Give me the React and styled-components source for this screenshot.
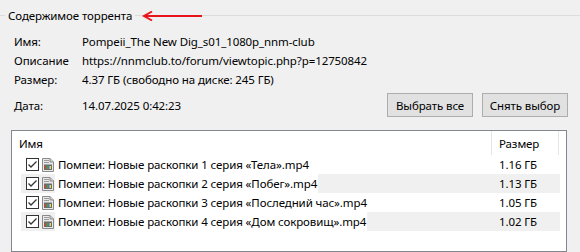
import styled, { createGlobalStyle } from 'styled-components';

const Global = createGlobalStyle`
    html, body {
        margin:0;
        padding:0;
        background:#f0f0f0;
    }
`

const Window = styled.div`
    width:580px;
    height:252px;
    overflow:hidden;
    background:#f0f0f0;
    color:#000;
    font-family:"Noto Sans", "Liberation Sans", sans-serif;
    font-size:11.5px;
    letter-spacing:-0.1px;
    display:flex;
    flex-direction:column;
`
const GroupHeader = styled.div`
    display:flex;
    align-items:center;
    height:16px;
    margin-top:8px;
    line-height:16px;
`
const Line = styled.div`
    height:16px;
    flex:${props=>props.grow ? 1 : 'none'};
    width:${props=>props.grow ? 'auto' : '5px'};
    background:linear-gradient(#dcdcdc,#dcdcdc) no-repeat 0 7px / 100% 1px;
    display:flex;
    align-items:center;
`
const GroupTitle = styled.span`
    padding:0 3px;
    white-space:nowrap;
`
const Info = styled.div`
    display:grid;
    grid-template-columns:68px 1fr;
    grid-auto-rows:19px;
    align-items:center;
    padding-left:14px;
    margin-top:8px;
    white-space:nowrap;
`
const DateRow = styled.div`
    display:flex;
    align-items:center;
    height:24px;
    margin-top:4px;
    padding:0 12px 0 14px;
`
const DateLabel = styled.span`
    width:68px;
`
const DateValue = styled.span`
    flex:1;
`
const Button = styled.button`
    width:86px;
    height:24px;
    margin-left:9px;
    border:1px solid #adadad;
    background:#e1e1e1;
    font:inherit;
    letter-spacing:inherit;
    color:#000;
    padding:0;
`
const List = styled.div`
    margin:13px 13px 0 11px;
    flex:1;
    border:1px solid #828790;
    background:#fff;
`
const Header = styled.div`
    display:grid;
    grid-template-columns:480px 67px 1fr;
    height:24px;
`
const HeaderCell = styled.div`
    display:flex;
    align-items:center;
    padding-left:7px;
    border-right:${props=>props.sep ? '1px solid #e5e5e5' : 'none'};
`
const Rows = styled.div`
    padding:0 6px 0 9px;
`
const Row = styled.div`
    display:grid;
    grid-template-columns:471px 1fr;
    height:19px;
    align-items:center;
    background:${props=>props.alt ? '#f0f0f0' : '#fff'};
`
const NameCell = styled.div`
    display:flex;
    align-items:center;
    padding-left:5px;
    white-space:nowrap;
`
const Label = styled.span`
    background:#fff;
    padding-left:3px;
    padding-right:1px;
    line-height:19px;
`
const SizeCell = styled.div`
    padding-left:7px;
`

function CheckBox()
{
    return(
        <svg width="13" height="13" viewBox="0 0 13 13" style={{flex:'none'}}>
            <rect x="0.5" y="0.5" width="12" height="12" fill="#fff" stroke="#333"/>
            <path d="M2.5 6.5 L5 9 L10.5 3.5" fill="none" stroke="#333" strokeWidth="1.3"/>
        </svg>
    )
}

function VideoIcon()
{
    return(
        <svg width="14" height="16" viewBox="0 0 14 16" style={{flex:'none',marginLeft:2}}>
            <path d="M1.5 1.5 H9 L12.5 5 V14.5 H1.5 Z" fill="#e8e8e8" stroke="#8a8a8a"/>
            <path d="M9 1.5 V5 H12.5" fill="#cfcfcf" stroke="#8a8a8a"/>
            <rect x="3" y="3" width="5" height="1" fill="#9a9a9a"/>
            <rect x="3" y="5" width="5" height="1" fill="#9a9a9a"/>
            <rect x="3" y="7.5" width="8" height="5.5" fill="#6c6c6c"/>
            <rect x="4" y="9" width="1.5" height="3" fill="#e53935"/>
            <rect x="5.5" y="9" width="1.5" height="3" fill="#43a047"/>
            <rect x="7" y="9" width="1.5" height="3" fill="#1e88e5"/>
            <rect x="8.5" y="9" width="1.5" height="3" fill="#fdd835"/>
        </svg>
    )
}

function Arrow()
{
    return(
        <svg width="62" height="12" viewBox="0 0 62 12" style={{marginLeft:6}}>
            <path d="M3 6 H61" stroke="#e8141b" strokeWidth="2"/>
            <path d="M11 1.5 L3 6 L11 10.5" fill="none" stroke="#e8141b" strokeWidth="2"/>
        </svg>
    )
}

const files = [
    {name:'Помпеи: Новые раскопки 1 серия «Тела».mp4', size:'1.16 ГБ'},
    {name:'Помпеи: Новые раскопки 2 серия «Побег».mp4', size:'1.13 ГБ'},
    {name:'Помпеи: Новые раскопки 3 серия «Последний час».mp4', size:'1.05 ГБ'},
    {name:'Помпеи: Новые раскопки 4 серия «Дом сокровищ».mp4', size:'1.02 ГБ'},
]

export default function App()
{
    return(
        <Window>
            <Global/>
            <GroupHeader>
                <Line/>
                <GroupTitle>Содержимое торрента</GroupTitle>
                <Line grow><Arrow/></Line>
            </GroupHeader>
            <Info>
                <span>Имя:</span>
                <span>Pompeii_The New Dig_s01_1080p_nnm-club</span>
                <span>Описание</span>
                <span>https://nnmclub.to/forum/viewtopic.php?p=12750842</span>
                <span>Размер:</span>
                <span>4.37 ГБ (свободно на диске: 245 ГБ)</span>
            </Info>
            <DateRow>
                <DateLabel>Дата:</DateLabel>
                <DateValue>14.07.2025 0:42:23</DateValue>
                <Button>Выбрать все</Button>
                <Button>Снять выбор</Button>
            </DateRow>
            <List>
                <Header>
                    <HeaderCell sep>Имя</HeaderCell>
                    <HeaderCell sep>Размер</HeaderCell>
                    <HeaderCell/>
                </Header>
                <Rows>
                    {files.map((f,i)=>(
                        <Row key={i} alt={i%2===1}>
                            <NameCell>
                                <CheckBox/>
                                <VideoIcon/>
                                <Label>{f.name}</Label>
                            </NameCell>
                            <SizeCell>{f.size}</SizeCell>
                        </Row>
                    ))}
                </Rows>
            </List>
        </Window>
    )
}
